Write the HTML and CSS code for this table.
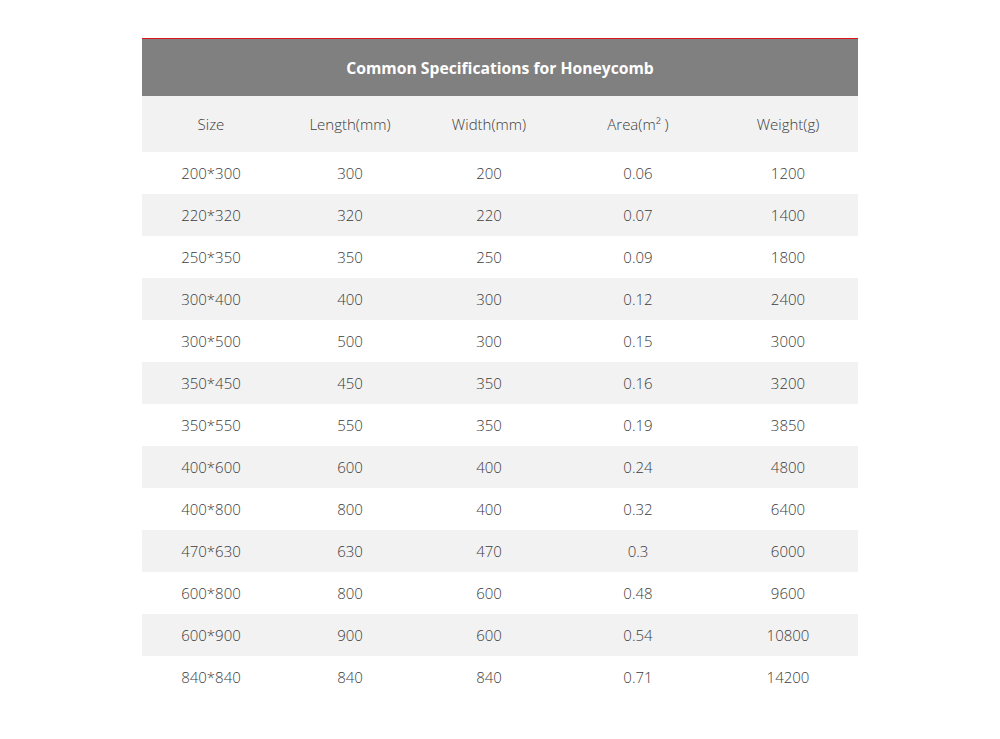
FILE: index.html
```html
<!DOCTYPE html>
<html>
<head>
<meta charset="utf-8">
<link rel="stylesheet" href="styles.css">
</head>
<body>
<div class="wrap">
<table class="spec">
<colgroup>
<col class="c1"><col class="c2"><col class="c3"><col class="c4"><col class="c5">
</colgroup>
<thead>
<tr class="title"><th colspan="5">Common Specifications for Honeycomb</th></tr>
<tr class="head"><td>Size</td><td>Length(mm)</td><td>Width(mm)</td><td>Area(m² )</td><td>Weight(g)</td></tr>
</thead>
<tbody>
<tr><td>200*300</td><td>300</td><td>200</td><td>0.06</td><td>1200</td></tr>
<tr><td>220*320</td><td>320</td><td>220</td><td>0.07</td><td>1400</td></tr>
<tr><td>250*350</td><td>350</td><td>250</td><td>0.09</td><td>1800</td></tr>
<tr><td>300*400</td><td>400</td><td>300</td><td>0.12</td><td>2400</td></tr>
<tr><td>300*500</td><td>500</td><td>300</td><td>0.15</td><td>3000</td></tr>
<tr><td>350*450</td><td>450</td><td>350</td><td>0.16</td><td>3200</td></tr>
<tr><td>350*550</td><td>550</td><td>350</td><td>0.19</td><td>3850</td></tr>
<tr><td>400*600</td><td>600</td><td>400</td><td>0.24</td><td>4800</td></tr>
<tr><td>400*800</td><td>800</td><td>400</td><td>0.32</td><td>6400</td></tr>
<tr><td>470*630</td><td>630</td><td>470</td><td>0.3</td><td>6000</td></tr>
<tr><td>600*800</td><td>800</td><td>600</td><td>0.48</td><td>9600</td></tr>
<tr><td>600*900</td><td>900</td><td>600</td><td>0.54</td><td>10800</td></tr>
<tr><td>840*840</td><td>840</td><td>840</td><td>0.71</td><td>14200</td></tr>
</tbody>
</table>
</div>
</body>
</html>
```
FILE: styles.css
```css
html, body {
  margin: 0;
  padding: 0;
  background: #fff;
}
body {
  font-family: "Open Sans", "Liberation Sans", sans-serif;
  color: #3c3c3c;
}
.wrap {
  padding-top: 38px;
  display: flex;
  justify-content: center;
}
.spec {
  width: 716px;
  border-collapse: collapse;
  table-layout: fixed;
  border-top: 1px solid #e0141e;
}
.c1 { width: 138px; }
.c2 { width: 140px; }
.c3 { width: 138px; }
.c4 { width: 160px; }
.c5 { width: 140px; }
.spec td, .spec th {
  padding: 0;
  text-align: center;
}
.title th {
  background: #808080;
  color: #fff;
  height: 57px;
  font-size: 15.7px;
  font-weight: 700;
}
.head td {
  background: #f2f2f2;
  height: 56px;
  font-size: 15px;
  font-weight: 300;
  color: #3c3c3c;
}
tbody td {
  height: 42px;
  font-size: 15px;
  font-weight: 300;
  color: #3c3c3c;
}
tbody tr:nth-child(even) td {
  background: #f2f2f2;
}
```
